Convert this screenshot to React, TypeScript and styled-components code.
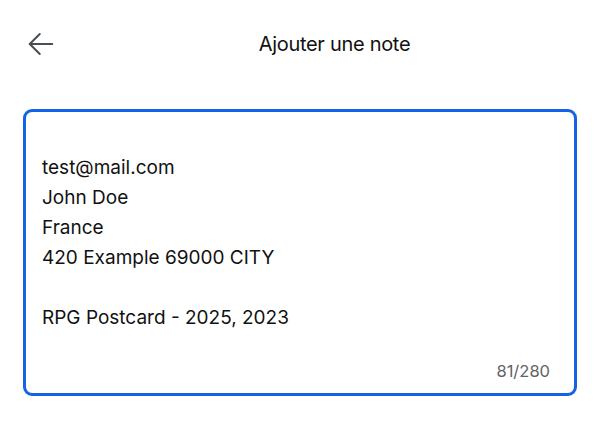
import React from "react";
import styled, { createGlobalStyle } from "styled-components";

const Global = createGlobalStyle`
  html, body { margin: 0; padding: 0; background: #ffffff; }
  body { font-family: Inter, "Noto Sans", sans-serif; color: #111111; }
`;

const Page = styled.div`
  width: 600px;
  height: 432px;
  display: flex;
  flex-direction: column;
  box-sizing: border-box;
  padding: 0 23px 0 23px;
`;

const Header = styled.header`
  height: 90px;
  display: flex;
  align-items: center;
  box-sizing: border-box;
  padding-bottom: 2px;
`;

const BackButton = styled.button`
  width: 36px;
  height: 36px;
  padding: 0;
  margin: 0 0 0 3px;
  border: none;
  background: transparent;
  display: flex;
  align-items: center;
  justify-content: flex-start;
  color: #4a4e56;
  cursor: pointer;
`;

const Title = styled.h1`
  flex: 1;
  margin: 0;
  padding-left: 30px;
  text-align: center;
  font-size: 20px;
  font-weight: 400;
  color: #111111;
  letter-spacing: -0.3px;
`;

const NoteBox = styled.div`
  margin-top: 19px;
  height: 287px;
  box-sizing: border-box;
  border: 3px solid #1462e8;
  border-radius: 9px;
  display: flex;
  flex-direction: column;
  padding: 41px 24px 12px 16px;
`;

const NoteText = styled.div`
  flex: 1;
  font-size: 19px;
  line-height: 30px;
  color: #111111;
  white-space: pre-line;
`;

const Counter = styled.div`
  align-self: flex-end;
  font-size: 16.5px;
  color: #5f6368;
`;

export default function App() {
  return (
    <>
      <Global />
      <Page>
        <Header>
          <BackButton aria-label="Retour">
            <svg width="30" height="30" viewBox="0 0 24 24" fill="none" stroke="currentColor" strokeWidth="1.6" strokeLinecap="round" strokeLinejoin="round">
              <path d="M21 12H3" />
              <path d="M11 4l-8 8 8 8" />
            </svg>
          </BackButton>
          <Title>Ajouter une note</Title>
        </Header>
        <NoteBox>
          <NoteText>{"test@mail.com\nJohn Doe\nFrance\n420 Example 69000 CITY\n\nRPG Postcard - 2025, 2023"}</NoteText>
          <Counter>81/280</Counter>
        </NoteBox>
      </Page>
    </>
  );
}
